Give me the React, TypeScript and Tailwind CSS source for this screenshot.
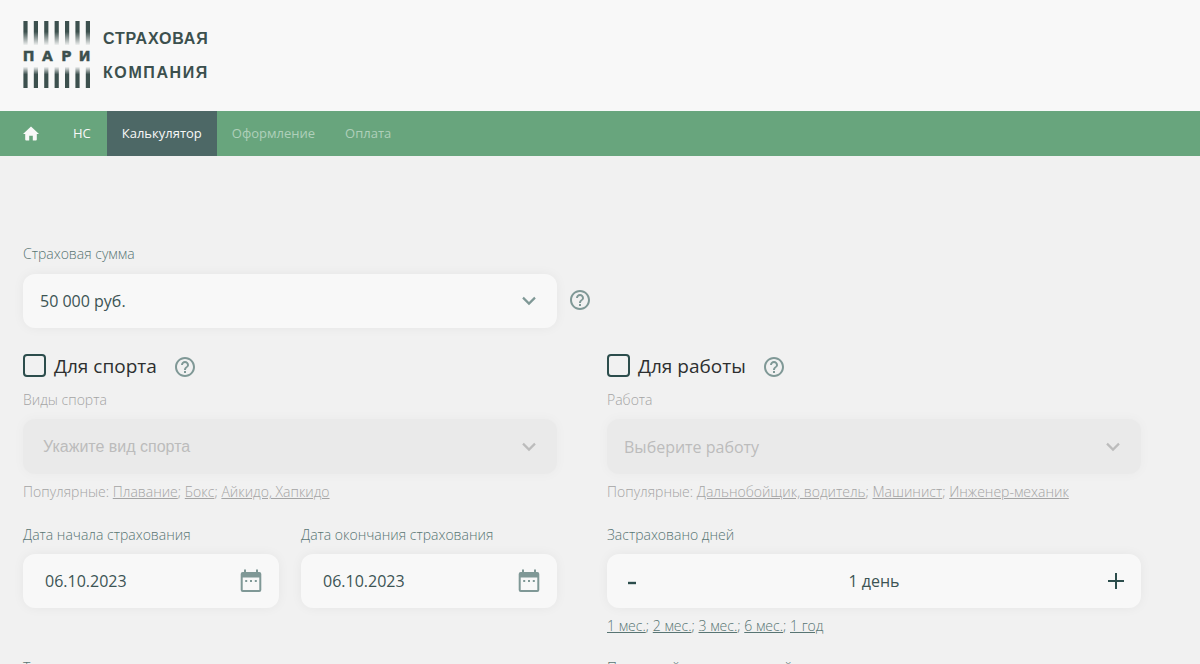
import { useState, type ReactNode } from "react";

const fieldShell = "rounded-xl bg-[#f8f8f8] shadow-[0_0_12px_rgba(0,0,0,0.05)]";
const disabledShell = "rounded-xl bg-[#eaeaea] shadow-[0_0_10px_3px_rgba(0,0,0,0.02)]";

function HomeIcon() {
  return (
    <svg viewBox="0 0 16 16" className="h-4 w-4" fill="#f8f8f8" aria-hidden="true">
      <path d="M8 0.5 L16 7.9 H13.8 V13.5 Q13.8 14.5 12.8 14.5 H9.8 V9.7 H6.2 V14.5 H3.2 Q2.2 14.5 2.2 13.5 V7.9 H0 Z" />
    </svg>
  );
}

function Logo() {
  const bars = [0, 1, 2, 3, 4, 5, 6];
  return (
    <svg viewBox="0 0 68 68" className="h-[68px] w-[68px]" role="img" aria-label="ПАРИ">
      <defs>
        <linearGradient id="fadeDown" x1="0" y1="0" x2="0" y2="1">
          <stop offset="0.45" stopColor="#3c504e" />
          <stop offset="1" stopColor="#3c504e" stopOpacity="0.05" />
        </linearGradient>
        <linearGradient id="fadeUp" x1="0" y1="0" x2="0" y2="1">
          <stop offset="0" stopColor="#3c504e" stopOpacity="0.05" />
          <stop offset="0.35" stopColor="#3c504e" />
        </linearGradient>
      </defs>
      {bars.map((i) => (
        <g key={i}>
          <rect x={0.4 + i * 10.4} y="0" width="4.2" height="24" fill="url(#fadeDown)" />
          <rect x={0.4 + i * 10.4} y="46" width="4.2" height="21" fill="url(#fadeUp)" />
        </g>
      ))}
      <g fontFamily="DejaVu Sans, sans-serif" fontWeight="700" fontSize="14" fill="#3c504e" stroke="#3c504e" strokeWidth="0.4" textAnchor="middle">
        <text x="5.5" y="39.5">П</text>
        <text x="24.5" y="39.5">А</text>
        <text x="43.5" y="39.5">Р</text>
        <text x="61.5" y="39.5">И</text>
      </g>
    </svg>
  );
}

function Chevron({ color }: { color: string }) {
  return (
    <svg viewBox="0 0 14 10" className="h-[10px] w-[14px]" fill="none" stroke={color} strokeWidth="2.2" aria-hidden="true">
      <path d="M1 1.6 L7 7.6 L13 1.6" />
    </svg>
  );
}

function Help({ about }: { about: string }) {
  return (
    <button type="button" aria-label={about} className="h-5 w-5 shrink-0">
      <svg viewBox="2 2 20 20" className="h-5 w-5" fill="#7f9896" aria-hidden="true">
        <path d="M11 18h2v-2h-2v2zm1-16C6.48 2 2 6.48 2 12s4.48 10 10 10 10-4.48 10-10S17.52 2 12 2zm0 18c-4.41 0-8-3.59-8-8s3.59-8 8-8 8 3.59 8 8-3.59 8-8 8zm0-14c-2.21 0-4 1.79-4 4h2c0-1.1.9-2 2-2s2 .9 2 2c0 2-3 1.75-3 5h2c0-2.25 3-2.5 3-5 0-2.21-1.79-4-4-4z" />
      </svg>
    </button>
  );
}

function CalendarIcon() {
  return (
    <svg viewBox="0 0 22 24" className="h-6 w-[22px]" aria-hidden="true">
      <path fillRule="evenodd" fill="#7f9896" d="M4 0.5 H6 V3 H16 V0.5 H18 V3 H19.3 Q21.3 3 21.3 5 V21 Q21.3 23 19.3 23 H2.7 Q0.7 23 0.7 21 V5 Q0.7 3 2.7 3 H4 Z M2.7 8.5 V21 H19.3 V8.5 Z" />
      <path fill="#7f9896" d="M5.2 11h2v2h-2z M10 11h2v2h-2z M14.8 11h2v2h-2z" />
    </svg>
  );
}

function Label({ htmlFor, muted, children }: { htmlFor: string; muted?: boolean; children: ReactNode }) {
  return (
    <label htmlFor={htmlFor} className={`block text-[14px] font-light leading-[22px] ${muted ? "text-[#a4a4a4]" : "text-[#587573]"}`}>
      {children}
    </label>
  );
}

function Check({ label, about }: { label: string; about: string }) {
  return (
    <div className="flex h-6 items-center">
      <label className="flex items-center gap-2 pb-px text-[19px] leading-6 text-[#2d2f2f]">
        <input type="checkbox" className="h-[23px] w-[23px] appearance-none rounded-[4px] border-2 border-[#2c4d4c] checked:bg-[#2c4d4c]" />
        {label}
      </label>
      <div className="ml-[18px] flex pt-[2px]">
        <Help about={about} />
      </div>
    </div>
  );
}

function Links({ items }: { items: string[] }) {
  return (
    <>
      {items.map((item, i) => (
        <span key={item}>
          <a href="#" className="underline">{item}</a>
          {i < items.length - 1 ? "; " : ""}
        </span>
      ))}
    </>
  );
}

function DateField({ id, label }: { id: string; label: string }) {
  return (
    <div className="min-w-0 flex-1">
      <Label htmlFor={id}>{label}</Label>
      <div className={`mt-2 flex h-[54px] items-center pr-[17px] ${fieldShell}`}>
        <input id={id} defaultValue="06.10.2023" className="h-full min-w-0 flex-1 bg-transparent pl-[22px] text-[16px] text-[#3c5454] outline-none" />
        <button type="button" aria-label={label}>
          <CalendarIcon />
        </button>
      </div>
    </div>
  );
}

export default function App() {
  const [days, setDays] = useState(1);
  return (
    <div className="h-screen overflow-hidden bg-[#f1f1f1] font-['Open_Sans',sans-serif]">
      <header className="flex h-[111px] items-start gap-3 bg-[#f8f8f8] pl-[23px] pt-[21px]">
        <Logo />
        <div className="pt-px font-['Liberation_Sans',sans-serif] text-[16px] font-bold leading-[34px] text-[#3c504e]">
          <div className="tracking-wider">СТРАХОВАЯ</div>
          <div className="tracking-widest">КОМПАНИЯ</div>
        </div>
      </header>

      <nav className="flex h-[45px] bg-[#68a57d] text-[13px] leading-[45px] text-[#f8f8f8]">
        <a href="#" aria-label="Главная" className="flex items-center pl-[23px] pr-[18px]">
          <HomeIcon />
        </a>
        <a href="#" className="px-4">НС</a>
        <a href="#" className="bg-[#4d6866] px-[15px]">Калькулятор</a>
        <a href="#" className="px-[15px] text-[#afd0ba]">Оформление</a>
        <a href="#" className="px-[15px] text-[#afd0ba]">Оплата</a>
      </nav>

      <main className="pl-[23px] pr-[59px] pt-[87px]">
        <div className="grid grid-cols-2 gap-x-[50px]">
          <div>
            <Label htmlFor="sum">Страховая сумма</Label>
          </div>
          <div />
          <div className={`mt-[9px] grid h-[54px] items-center ${fieldShell}`}>
            <select id="sum" className="col-start-1 row-start-1 h-full w-full appearance-none bg-transparent pl-[17px] text-[16px] text-[#3c5454] outline-none">
              <option>50 000 руб.</option>
            </select>
            <span className="pointer-events-none col-start-1 row-start-1 mr-[21px] justify-self-end">
              <Chevron color="#7f9896" />
            </span>
          </div>
          <div className="-ml-[37px] mt-[25px]">
            <Help about="О страховой сумме" />
          </div>
        </div>

        <div className="mt-[26px] grid grid-cols-2 gap-x-[50px]">
          <section>
            <Check label="Для спорта" about="О страховании спорта" />
            <div className="mt-[11px]">
              <Label htmlFor="sport" muted>Виды спорта</Label>
            </div>
            <div className={`mt-2 flex h-[55px] items-center pr-[21px] ${disabledShell}`}>
              <input id="sport" disabled placeholder="Укажите вид спорта" className="h-full min-w-0 flex-1 bg-transparent pl-5 font-['Liberation_Sans',sans-serif] text-[16px] placeholder:text-[#bcbcbc]" />
              <Chevron color="#bcbcbc" />
            </div>
            <p className="mt-2 text-[14px] font-light leading-5 text-[#a4a4a4]">
              Популярные: <Links items={["Плавание", "Бокс", "Айкидо, Хапкидо"]} />
            </p>
            <div className="mt-[22px] flex gap-[22px]">
              <DateField id="from" label="Дата начала страхования" />
              <DateField id="to" label="Дата окончания страхования" />
            </div>
            <div className="mt-[49px]">
              <Label htmlFor="from">Территория</Label>
            </div>
          </section>

          <section>
            <Check label="Для работы" about="О страховании работы" />
            <div className="mt-[11px]">
              <Label htmlFor="work" muted>Работа</Label>
            </div>
            <div className={`mt-2 grid h-[55px] items-center ${disabledShell}`}>
              <select id="work" disabled className="col-start-1 row-start-1 h-full w-full appearance-none bg-transparent pl-[17px] text-[16px] text-[#bcbcbc] opacity-100">
                <option>Выберите работу</option>
              </select>
              <span className="pointer-events-none col-start-1 row-start-1 mr-[21px] justify-self-end">
                <Chevron color="#bcbcbc" />
              </span>
            </div>
            <p className="mt-2 text-[14px] font-light leading-5 text-[#a4a4a4]">
              Популярные: <Links items={["Дальнобойщик, водитель", "Машинист", "Инженер-механик"]} />
            </p>
            <div className="mt-[22px]">
              <Label htmlFor="days">Застраховано дней</Label>
              <div className={`mt-2 flex h-[54px] items-center px-4 ${fieldShell}`}>
                <button type="button" aria-label="Меньше" onClick={() => setDays(Math.max(1, days - 1))} className="flex h-5 w-[18px] items-center justify-center">
                  <svg viewBox="0 0 18 18" className="h-[18px] w-[18px]" aria-hidden="true">
                    <path d="M5 11h8" stroke="#2c4d4c" strokeWidth="2.4" />
                  </svg>
                </button>
                <input id="days" value={`${days} день`} readOnly className="h-full min-w-0 flex-1 bg-transparent text-center text-[16px] text-[#3c5454] outline-none" />
                <button type="button" aria-label="Больше" onClick={() => setDays(days + 1)} className="flex h-5 w-[18px] items-center justify-center">
                  <svg viewBox="0 0 18 18" className="h-[18px] w-[18px]" aria-hidden="true">
                    <path d="M1 9h16M9 1v16" stroke="#2c4d4c" strokeWidth="2" />
                  </svg>
                </button>
              </div>
            </div>
            <p className="mt-2 text-[14px] font-light leading-5 text-[#587573]">
              <Links items={["1 мес.", "2 мес.", "3 мес.", "6 мес.", "1 год"]} />
            </p>
            <div className="mt-[21px]">
              <Label htmlFor="days">Последний застрахованный</Label>
            </div>
          </section>
        </div>
      </main>
    </div>
  );
}
